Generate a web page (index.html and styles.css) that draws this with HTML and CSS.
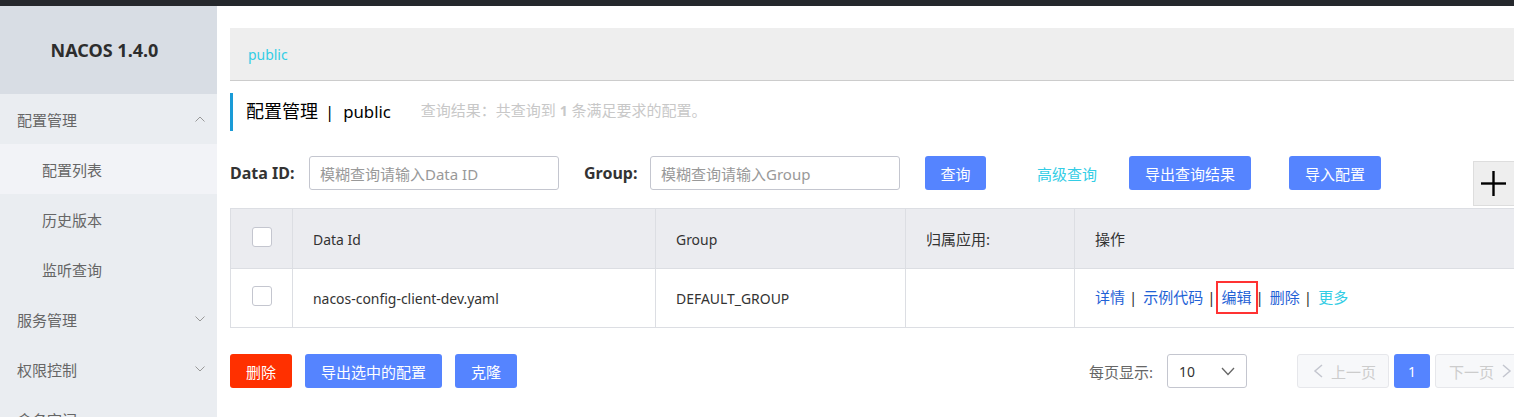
FILE: index.html
```html
<!DOCTYPE html>
<html lang="zh-CN">
<head>
<meta charset="utf-8">
<title>Nacos</title>
<link rel="stylesheet" href="styles.css">
</head>
<body>
<div class="topbar"></div>
<div class="layout">
  <aside class="sidebar">
    <div class="logo">NACOS 1.4.0</div>
    <ul class="menu">
      <li class="menu-item"><span>配置管理</span><svg class="chev" width="10" height="6" viewBox="0 0 10 6"><polyline points="0.5,5.5 5,1 9.5,5.5" fill="none" stroke="#999" stroke-width="1"/></svg></li>
      <li class="sub-item active">配置列表</li>
      <li class="sub-item">历史版本</li>
      <li class="sub-item">监听查询</li>
      <li class="menu-item"><span>服务管理</span><svg class="chev" width="10" height="6" viewBox="0 0 10 6"><polyline points="0.5,0.5 5,5 9.5,0.5" fill="none" stroke="#999" stroke-width="1"/></svg></li>
      <li class="menu-item"><span>权限控制</span><svg class="chev" width="10" height="6" viewBox="0 0 10 6"><polyline points="0.5,0.5 5,5 9.5,0.5" fill="none" stroke="#999" stroke-width="1"/></svg></li>
      <li class="menu-item"><span>命名空间</span></li>
    </ul>
  </aside>
  <main class="main">
    <div class="ns-bar"><span class="ns-link en">public</span></div>
    <div class="page-title">
      <span class="title-text">配置管理<span class="title-sep en">|</span><span class="en">public</span></span>
      <span class="result">查询结果：共查询到 <b class="en">1</b> 条满足要求的配置。</span>
    </div>
    <div class="search-row">
      <label class="field-label label-id">Data ID:</label>
      <div class="input"><span class="placeholder">模糊查询请输入Data ID</span></div>
      <label class="field-label label-group">Group:</label>
      <div class="input"><span class="placeholder">模糊查询请输入Group</span></div>
      <button class="btn btn-primary btn-query">查询</button>
      <a class="adv-link">高级查询</a>
      <button class="btn btn-primary btn-export">导出查询结果</button>
      <button class="btn btn-primary btn-import">导入配置</button>
      <div class="plus-box"><svg width="25" height="25" viewBox="0 0 25 25"><line x1="0" y1="12.5" x2="25" y2="12.5" stroke="#000" stroke-width="2.4"/><line x1="12.5" y1="0" x2="12.5" y2="25" stroke="#000" stroke-width="2.4"/></svg></div>
    </div>
    <table class="config-table">
      <colgroup>
        <col class="c-check"><col class="c-id"><col class="c-group"><col class="c-app"><col>
      </colgroup>
      <thead>
        <tr>
          <th class="check-cell"><span class="checkbox"></span></th>
          <th><span class="en">Data Id</span></th>
          <th><span class="en">Group</span></th>
          <th>归属应用:</th>
          <th>操作</th>
        </tr>
      </thead>
      <tbody>
        <tr>
          <td class="check-cell"><span class="checkbox"></span></td>
          <td><span class="en">nacos-config-client-dev.yaml</span></td>
          <td><span class="en">DEFAULT_GROUP</span></td>
          <td></td>
          <td class="actions"><a class="act">详情</a><span class="sep">|</span><a class="act">示例代码</a><span class="sep">|</span><a class="act marked">编辑</a><span class="sep">|</span><a class="act">删除</a><span class="sep">|</span><a class="act more">更多</a></td>
        </tr>
      </tbody>
    </table>
    <div class="footer-row">
      <button class="btn btn-danger">删除</button>
      <button class="btn btn-primary">导出选中的配置</button>
      <button class="btn btn-primary">克隆</button>
      <div class="pagination">
        <span class="page-size-label">每页显示:</span>
        <div class="select"><span class="en">10</span><svg width="14" height="9" viewBox="0 0 14 9"><polyline points="1,1 7,7.5 13,1" fill="none" stroke="#666" stroke-width="1.3"/></svg></div>
        <div class="pager">
          <button class="page-btn disabled prev"><svg width="10" height="14" viewBox="0 0 10 14"><polyline points="9,1 2,7 9,13" fill="none" stroke="#c4c6cf" stroke-width="1.5"/></svg><span>上一页</span></button>
          <button class="page-btn current"><span class="en">1</span></button>
          <button class="page-btn disabled next"><span>下一页</span><svg width="10" height="14" viewBox="0 0 10 14"><polyline points="1,1 8,7 1,13" fill="none" stroke="#c4c6cf" stroke-width="1.5"/></svg></button>
        </div>
      </div>
    </div>
  </main>
</div>
</body>
</html>
```
FILE: styles.css
```css
* { box-sizing: border-box; }
html, body { margin: 0; padding: 0; overflow: hidden; }
body {
  width: 1514px;
  height: 417px;
  font-family: "Noto Sans", "Noto Sans CJK SC", sans-serif;
  font-size: 15px;
  color: #333;
  background: #fff;
}
.en { font-size: 0.93em; }

.topbar { height: 6px; background: #25282c; }
.layout { display: flex; height: 411px; }

.sidebar { width: 217px; flex: none; background: #eaedf1; overflow: hidden; }
.logo {
  height: 88px;
  background: #d8dde4;
  display: flex;
  align-items: center;
  justify-content: center;
  padding-right: 8px;
  font-weight: 700;
  font-size: 18px;
  color: #2d2d2d;
}
.menu { list-style: none; margin: 0; padding: 0; }
.menu-item {
  height: 50px;
  display: flex;
  align-items: center;
  justify-content: space-between;
  padding: 0 12px 0 17px;
  color: #666;
}
.sub-item {
  height: 50px;
  display: flex;
  align-items: center;
  padding-left: 42px;
  color: #666;
}
.sub-item.active { background: #f2f3f7; }

.main { flex: none; width: 1310px; padding: 22px 0 0 13px; }

.ns-bar {
  height: 53px;
  background: #eee;
  border-bottom: 1px solid #ccc;
  padding-left: 18px;
  display: flex;
  align-items: center;
}
.ns-link { color: #33cde5; }

.page-title {
  margin-top: 12px;
  height: 38px;
  border-left: 3px solid #1a9bd7;
  padding-left: 13px;
  padding-bottom: 5px;
  display: flex;
  align-items: center;
}
.title-text { font-size: 18px; color: #000; }
.title-sep { margin: 0 9px 0 7px; }
.result { margin-left: 30px; color: #c8c8c8; font-size: 15px; }
.result b { font-weight: 700; }

.search-row {
  margin-top: 25px;
  display: flex;
  align-items: flex-start;
}
.field-label {
  height: 34px;
  display: flex;
  align-items: center;
  font-weight: 700;
  font-size: 16px;
  color: #333;
}
.label-id { width: 79px; }
.label-group { width: 66px; margin-left: 25px; }
.input {
  width: 250px;
  height: 34px;
  border: 1px solid #c4c6cf;
  border-radius: 3px;
  padding: 0 10px;
  display: flex;
  align-items: center;
}
.placeholder { color: #999; }

.btn {
  height: 34px;
  border: none;
  border-radius: 3px;
  padding: 0 16px;
  font-family: inherit;
  font-size: 15px;
  color: #fff;
  cursor: pointer;
}
.btn-primary { background: #5584ff; }
.btn-danger { background: #ff3000; }
.btn-query { margin-left: 25px; width: 61px; padding: 0; }
.adv-link {
  margin-left: 51px;
  height: 34px;
  display: flex;
  align-items: center;
  color: #33cde5;
}
.btn-export { margin-left: 32px; width: 122px; padding: 0; }
.btn-import { margin-left: 38px; width: 92px; padding: 0; }
.plus-box {
  margin-left: auto;
  margin-top: 5px;
  margin-right: 4px;
  width: 50px;
  height: 45px;
  background: #eee;
  border: 1px solid #ddd;
  padding-left: 7px;
  display: flex;
  align-items: center;
}

.config-table {
  margin-top: 2px;
  width: 100%;
  table-layout: fixed;
  border-collapse: collapse;
  border: 1px solid #dcdee3;
}
.c-check { width: 62px; }
.c-id { width: 363px; }
.c-group { width: 250px; }
.c-app { width: 169px; }
.config-table th,
.config-table td {
  border: 1px solid #dcdee3;
  padding: 0 20px;
  text-align: left;
  font-weight: 400;
  color: #333;
  vertical-align: middle;
}
.config-table th { height: 60px; background: #ebecf0; }
.config-table td { height: 59px; background: #fff; }
.config-table .check-cell { padding: 0; font-size: 0; line-height: 0; }
.checkbox {
  display: block;
  width: 20px;
  height: 20px;
  margin: 0 auto 4px;
  border: 1px solid #c4c6cf;
  border-radius: 3px;
  background: #fff;
}

.config-table .actions { white-space: nowrap; padding-bottom: 4px; }
.act { color: #1f62d6; margin-right: 4px; }
.act.more { color: #33cde5; }
.sep { color: #333; margin-right: 6px; }
.marked { position: relative; display: inline-block; line-height: 20px; }
.marked::after {
  content: "";
  position: absolute;
  left: -6px;
  right: -6px;
  top: -6px;
  height: 29px;
  border: 2px solid #f33;
}

.footer-row {
  margin-top: 26px;
  display: flex;
  align-items: center;
  gap: 13px;
}
.pagination { margin-left: auto; display: flex; align-items: center; }
.page-size-label { color: #666; }
.select {
  margin-left: 14px;
  width: 80px;
  height: 34px;
  border: 1px solid #c4c6cf;
  border-radius: 3px;
  padding: 0 11px 0 11px;
  display: flex;
  align-items: center;
  justify-content: space-between;
  color: #333;
}
.pager { margin-left: 50px; display: flex; gap: 5px; }
.page-btn {
  height: 34px;
  border-radius: 3px;
  font-family: inherit;
  font-size: 15px;
  display: flex;
  align-items: center;
  gap: 8px;
  padding: 0;
}
.page-btn.disabled {
  width: 92px;
  background: #f7f8fa;
  border: 1px solid #e6e7eb;
  color: #ccc;
}
.page-btn.prev { padding-left: 15px; }
.page-btn.next { padding-left: 13px; }
.page-btn.current {
  width: 36px;
  justify-content: center;
  background: #5584ff;
  border: none;
  color: #fff;
}
```
